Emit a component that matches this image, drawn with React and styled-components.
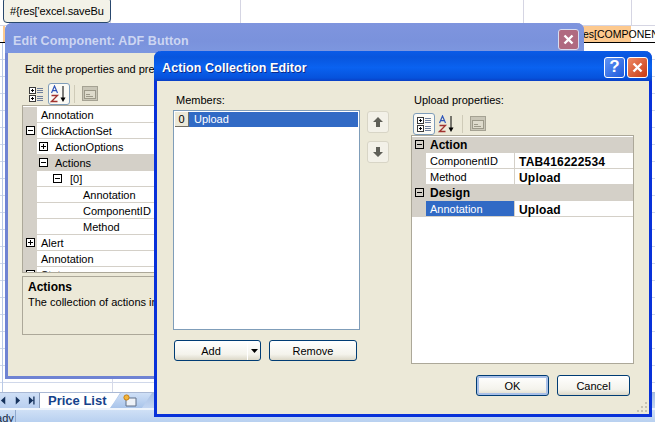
import styled, { createGlobalStyle } from "styled-components";

const GlobalStyle = createGlobalStyle`
  html, body { margin: 0; padding: 0; }
  body { width: 655px; height: 422px; overflow: hidden; background: #fff; font-family: "Liberation Sans", Arial, sans-serif; font-size: 11px; color: #000; }
`;

const Page = styled.div`
  position: relative;
  width: 655px;
  height: 422px;
  overflow: hidden;
  display: flex;
  flex-direction: column;
`;

// spreadsheet behind the dialogs
const Sheet = styled.div`
  flex: 1;
  position: relative;
  background-color: #fff;
  background-image:
    linear-gradient(#b9c9e6, #b9c9e6),
    linear-gradient(#d5d9e8, #d5d9e8),
    repeating-linear-gradient(to bottom, transparent 0 16px, #d0d8ea 16px 17px);
  background-size: 1px 100%, 1px 100%, 100% 100%;
  background-position: 2px 0, 112px 0, 0 9px;
  background-repeat: no-repeat, no-repeat, repeat;
`;

const TopCells = styled.div`
  display: flex;
  height: 25px;
  background: #fff;
  border-bottom: 1px solid #d5d5e3;
`;

const TopCell = styled.div`
  width: ${(p) => p.$w}px;
  flex: none;
  box-sizing: border-box;
  border-right: 1px solid #d5d5e3;
`;

const Row2 = styled.div`
  display: flex;
  height: 16px;
  border-bottom: 1px solid #000;
  background: #fff;
`;

const OrangeEdge = styled.div`
  width: 2px;
  margin-left: 3px;
  background: #fdc98e;
`;

const CellText = styled.div`
  margin-left: auto;
  width: 72px;
  height: 16px;
  font-size: 10.5px;
  line-height: 17px;
  white-space: nowrap;
  overflow: hidden;
  background: linear-gradient(to right, #fdc98e 48px, #fff 48px);
`;

const CellEditor = styled.div`
  position: absolute;
  left: 3px;
  top: -3px;
  width: 108px;
  height: 26px;
  box-sizing: border-box;
  padding: 5px 0 0 6px;
  border: 1px solid #29486e;
  border-radius: 4px;
  background: #f3f2e8;
  font-size: 11px;
  letter-spacing: -0.1px;
  line-height: 16px;
  white-space: nowrap;
  overflow: hidden;
`;

const TabStrip = styled.div`
  height: 15px;
  display: flex;
  align-items: stretch;
  background: linear-gradient(#a7bfe4, #c3d6f2);
  border-top: 1px solid #a9b8d4;
`;

const NavBox = styled.div`
  width: 40px;
  display: flex;
  align-items: center;
  justify-content: flex-end;
  gap: 7px;
  padding-right: 4px;
  box-sizing: border-box;
  border-right: 1px solid #8a9cba;
  background: linear-gradient(#cfdff6, #b9cff0);
`;

const SheetTab = styled.div`
  width: 80px;
  flex: none;
  background: #fff;
  color: #15428b;
  font-weight: bold;
  font-size: 13px;
  line-height: 16px;
  padding-left: 8px;
  box-sizing: border-box;
  clip-path: polygon(0 0, 100% 0, 88% 100%, 0 100%);
`;

const NewTab = styled.div`
  width: 42px;
  flex: none;
  margin-left: -10px;
  padding: 1px 0 0 13px;
  box-sizing: border-box;
  background: linear-gradient(#cfe0f7, #a9c4ea);
  clip-path: polygon(26% 0, 100% 0, 76% 100%, 0 100%);
`;

const StatusBar = styled.div`
  height: 12px;
  background: linear-gradient(#cfe0f6, #b8d0f0);
  display: flex;
  font-size: 11px;
  line-height: 17px;
  color: #15283f;
  overflow: hidden;
  border-top: 2px solid #eef4fc;
`;

const StatusText = styled.div`
  width: 24px;
  margin-left: -18px;
  flex: none;
  text-align: right;
  padding-right: 9px;
  border-right: 1px solid #8fa8cc;
`;

// window frames sit on a free desktop
const Win = styled.div`
  position: absolute;
  left: ${(p) => p.$x}px;
  top: ${(p) => p.$y}px;
  width: ${(p) => p.$w}px;
  height: ${(p) => p.$h}px;
  box-sizing: border-box;
  display: flex;
  flex-direction: column;
  border: 3px solid ${(p) => p.$frame};
  border-top: 0;
  border-radius: 7px 7px 0 0;
  background: #ece9d8;
`;

const TitleBar = styled.div`
  height: ${(p) => p.$h}px;
  flex: none;
  margin: 0 -3px;
  display: flex;
  align-items: center;
  padding: 2px ${(p) => p.$pr}px 0 8px;
  box-sizing: border-box;
  border-radius: 7px 7px 0 0;
  background: ${(p) => p.$bg};
  font-weight: bold;
  font-size: 12.5px;
  color: ${(p) => p.$color};
  text-shadow: ${(p) => p.$shadow || "none"};
  letter-spacing: 0.1px;
`;

const TitleText = styled.span`
  flex: 1;
  white-space: nowrap;
  padding-top: ${(p) => p.$pt}px;
`;

const CapBtn = styled.div`
  width: 21px;
  height: 21px;
  box-sizing: border-box;
  border: 1px solid ${(p) => p.$edge};
  border-radius: 3px;
  background: ${(p) => p.$bg};
  margin-left: 2px;
  display: flex;
  align-items: center;
  justify-content: center;
  color: #fff;
  font-size: 17px;
  font-weight: bold;
  text-shadow: none;
`;

const EditBody = styled.div`
  flex: 1;
  padding: 8px 0 0 14px;
  display: flex;
  flex-direction: column;
  min-height: 0;
`;

const Hint = styled.div`
  font-size: 11px;
  line-height: 16px;
  white-space: nowrap;
  padding-left: 3px;
`;

const Toolbar = styled.div`
  height: 23px;
  display: flex;
  align-items: center;
  margin-top: ${(p) => p.$mt || 0}px;
  padding-left: ${(p) => p.$pl}px;
  gap: 1px;
`;

const ToolBtn = styled.div`
  width: 22px;
  height: 22px;
  box-sizing: border-box;
  display: flex;
  align-items: center;
  justify-content: center;
  border: 1px solid ${(p) => (p.$active ? "#7f9db9" : "transparent")};
  border-radius: 3px;
  background: ${(p) => (p.$active ? "#fbfaf5" : "transparent")};
`;

const ToolSep = styled.div`
  width: 1px;
  height: 18px;
  background: #cfcbb8;
  margin: 0 3px;
`;

const GridRow = styled.div`
  height: 16px;
  box-sizing: border-box;
  display: flex;
  border-bottom: 1px solid #d4d0c8;
  background: ${(p) => (p.$band ? "#d4d0c8" : "#fff")};
  font-size: 11px;
  line-height: 16px;
  white-space: nowrap;
`;

const Gutter = styled.div`
  width: 14px;
  flex: none;
  background: #d4d0c8;
  display: flex;
  align-items: center;
  justify-content: center;
`;

const RowLabel = styled.div`
  flex: ${(p) => (p.$fixed ? "none" : 1)};
  width: ${(p) => (p.$fixed ? `${p.$fixed}px` : "auto")};
  display: flex;
  align-items: center;
  gap: ${(p) => p.$gap || 7}px;
  padding-left: ${(p) => p.$indent}px;
  box-sizing: border-box;
  font-weight: ${(p) => (p.$bold ? "bold" : "normal")};
  font-size: ${(p) => (p.$bold ? 12 : 11)}px;
  background: ${(p) => (p.$selected ? "#316ac5" : "transparent")};
  color: ${(p) => (p.$selected ? "#fff" : "#000")};
  border-right: ${(p) => (p.$fixed ? "1px solid #d4d0c8" : "0")};
`;

const RowValue = styled.div`
  flex: 1;
  padding-left: 4px;
  font-weight: bold;
  font-size: 12px;
  letter-spacing: 0.2px;
`;

const PropGrid = styled.div`
  height: ${(p) => p.$h}px;
  flex: none;
  box-sizing: border-box;
  border: 1px solid #aca899;
  padding-top: 1px;
  background: #fff;
  overflow: hidden;
`;

const DetailGrid = styled(PropGrid)`
  ${RowLabel}, ${RowValue} {
    padding-top: 1px;
  }
`;

const Expander = styled.span`
  width: 9px;
  height: 9px;
  flex: none;
  box-sizing: border-box;
  border: 1px solid #000;
  background: ${(p) => (p.$clear ? "transparent" : "#fff")};
  position: relative;
  &::before {
    content: "";
    position: absolute;
    left: 1px;
    right: 1px;
    top: 3px;
    height: 1px;
    background: #000;
  }
  &::after {
    content: "";
    display: ${(p) => (p.$plus ? "block" : "none")};
    position: absolute;
    top: 1px;
    bottom: 1px;
    left: 3px;
    width: 1px;
    background: #000;
  }
`;

const DescPanel = styled.div`
  margin-top: 3px;
  height: 59px;
  box-sizing: border-box;
  border: 1px solid #aca899;
  padding: 3px 0 0 5px;
  font-size: 11px;
  line-height: 15px;
  white-space: nowrap;
`;

const DescTitle = styled.div`
  font-weight: bold;
  font-size: 12px;
`;

const DialogBody = styled.div`
  flex: 1;
  position: relative;
  display: flex;
  flex-direction: column;
  padding: 0 19px 0 16px;
  min-height: 0;
`;

const Columns = styled.div`
  display: flex;
  margin-top: 11px;
`;

const MembersCol = styled.div`
  width: 187px;
  flex: none;
`;

const ColLabel = styled.div`
  font-size: 11px;
  line-height: 16px;
  padding-left: 3px;
`;

const ListBox = styled.div`
  margin-top: 2px;
  height: 220px;
  box-sizing: border-box;
  border: 1px solid #7f9db9;
  background: #fff;
  padding: 1px;
`;

const ListItem = styled.div`
  height: 15px;
  display: flex;
  background: #316ac5;
  color: #fff;
  font-size: 11px;
  line-height: 15px;
`;

const IndexBadge = styled.span`
  width: 14px;
  flex: none;
  background: #ece9d8;
  color: #000;
  text-align: center;
  border-right: 1px solid #716f64;
  border-bottom: 1px solid #716f64;
  box-sizing: border-box;
`;

const ItemText = styled.span`
  padding-left: 5px;
`;

const ButtonRow = styled.div`
  display: flex;
  gap: 8px;
  margin-top: 10px;
  padding-left: 1px;
`;

const XpButton = styled.div`
  width: ${(p) => p.$w}px;
  height: 21px;
  box-sizing: border-box;
  border: 1px solid #003c74;
  border-radius: 3px;
  background: linear-gradient(#fff, #f4f3ec 70%, #dcd8c8);
  box-shadow: ${(p) => (p.$primary ? "inset 0 0 0 2px #a9c0e8" : "none")};
  display: flex;
  align-items: center;
  justify-content: center;
  font-size: 11px;
`;

const SplitLabel = styled.span`
  flex: 1;
  text-align: center;
`;

const SplitArrow = styled.span`
  width: 12px;
  height: 100%;
  display: flex;
  align-items: center;
  justify-content: center;
  border-left: 1px solid #fff;
`;

const ArrowCol = styled.div`
  width: 22px;
  flex: none;
  margin: 19px 0 0 7px;
  display: flex;
  flex-direction: column;
  gap: 8px;
`;

const ArrowBtn = styled.div`
  width: 22px;
  height: 22px;
  box-sizing: border-box;
  border: 1px solid #d8d5c6;
  border-radius: 3px;
  background: #f3f1e8;
  display: flex;
  align-items: center;
  justify-content: center;
`;

const PropsCol = styled.div`
  width: 223px;
  margin-left: 22px;
  flex: none;
`;

const DialogFooter = styled.div`
  display: flex;
  justify-content: flex-end;
  gap: 8px;
  margin-top: 11px;
`;

const Grip = styled.svg`
  position: absolute;
  right: 1px;
  bottom: 1px;
`;

const CloseGlyph = () => (
  <svg width="11" height="11" viewBox="0 0 11 11">
    <path d="M1.5 1.5l8 8M9.5 1.5l-8 8" stroke="#fff" strokeWidth="2.4" fill="none" />
  </svg>
);

const ExpanderIcon = () => (
  <svg width="16" height="16" viewBox="0 0 16 16">
    <g fill="#fff" stroke="#3a3a3a">
      <rect x="1.5" y="1.5" width="6" height="6" />
      <rect x="1.5" y="9.5" width="6" height="6" />
    </g>
    <path d="M3 4.5h3M4.5 3v3M3 12.5h3M4.5 11v3" stroke="#000" />
    <path d="M9 2.5h6M9 4.5h6M9 6.5h6M9 10.5h6M9 12.5h6M9 14.5h6" stroke="#6f7f9c" />
  </svg>
);

const SortIcon = () => (
  <svg width="18" height="18" viewBox="0 0 18 18">
    <path d="M1.5 8 4.5 1l3 7M2.6 5.6h3.8" fill="none" stroke="#2f55b8" strokeWidth="1.2" />
    <path d="M1.5 10.5h6L1.5 16.5h6" fill="none" stroke="#a0322f" strokeWidth="1.3" />
    <path d="M13 1v12" stroke="#000" />
    <path d="M10.5 12.5h5L13 17z" fill="#000" />
  </svg>
);

const PagesIcon = () => (
  <svg width="16" height="15" viewBox="0 0 16 15">
    <rect x="0.5" y="0.5" width="15" height="14" fill="#c9c6b7" stroke="#a5a293" />
    <rect x="2.5" y="4.5" width="11" height="8" fill="#dedbcc" stroke="#9c9989" />
    <path d="M4 8.5h4M4 10.5h7" stroke="#9c9989" />
  </svg>
);

const MoveIcon = ({ down }) => (
  <svg width="12" height="12" viewBox="0 0 12 12">
    <path d={down ? "M4 1h4v5h3L6 11 1 6h3z" : "M4 11h4V6h3L6 1 1 6h3z"} fill="#5f5f57" />
  </svg>
);

const DropArrow = () => (
  <svg width="7" height="4" viewBox="0 0 7 4">
    <path d="M0 0h7L3.5 4z" fill="#000" />
  </svg>
);

const NavArrow = ({ d }) => (
  <svg width="8" height="9" viewBox="0 0 8 9">
    <path d={d} fill="#15315c" />
  </svg>
);

const NewSheetIcon = () => (
  <svg width="14" height="13" viewBox="0 0 14 13">
    <path d="M3 4h10v8H3z" fill="#eef2f8" stroke="#5f6f88" />
    <circle cx="3.5" cy="3.5" r="2.6" fill="#f2b53c" stroke="#c77f14" />
  </svg>
);

const editRows = [
  { label: "Annotation" },
  { label: "ClickActionSet", outer: "minus" },
  { label: "ActionOptions", expander: "plus" },
  { label: "Actions", expander: "minus", band: true },
  { label: "[0]", expander: "minus", indent: 16, gap: 8 },
  { label: "Annotation", indent: 46 },
  { label: "ComponentID", indent: 46 },
  { label: "Method", indent: 46 },
  { label: "Alert", outer: "plus" },
  { label: "Annotation" },
  { label: "State", outer: "plus" },
];

const App = () => {
  return (
    <Page>
      <GlobalStyle />
      <Sheet>
        <TopCells>
          <TopCell $w={111} />
          <TopCell $w={130} />
          <TopCell $w={283} />
          <TopCell $w={108} />
        </TopCells>
        <Row2>
          <OrangeEdge />
          <CellText>es[COMPONENT</CellText>
        </Row2>
        <CellEditor>#{"{"}res['excel.saveBu</CellEditor>
      </Sheet>
      <TabStrip>
        <NavBox>
          <NavArrow d="M6 0v9L1 4.5z" />
          <NavArrow d="M2 0v9l5-4.5z" />
          <NavArrow d="M1 0v9l5-4.5zM6 0h1.5v9H6z" />
        </NavBox>
        <SheetTab>Price List</SheetTab>
        <NewTab>
          <NewSheetIcon />
        </NewTab>
      </TabStrip>
      <StatusBar>
        <StatusText>Ready</StatusText>
      </StatusBar>

      <Win $x={5} $y={23} $w={579} $h={356} $frame="#6f83d3">
        <TitleBar $h={30} $pr={5} $bg="linear-gradient(#7f95de, #7a92dc 60%, #7d97e0)" $color="#cdd6f2">
          <TitleText $pt={3}>Edit Component: ADF Button</TitleText>
          <CapBtn $bg="#b06a80" $edge="#d8dcef">
            <CloseGlyph />
          </CapBtn>
        </TitleBar>
        <EditBody>
          <Hint>Edit the properties and pres</Hint>
          <Toolbar $mt={5} $pl={3}>
            <ToolBtn>
              <ExpanderIcon />
            </ToolBtn>
            <ToolBtn $active>
              <SortIcon />
            </ToolBtn>
            <ToolSep />
            <ToolBtn>
              <PagesIcon />
            </ToolBtn>
          </Toolbar>
          <PropGrid $h={168}>
            {editRows.map((row, i) => (
              <GridRow key={i} $band={row.band}>
                <Gutter>{row.outer && <Expander $plus={row.outer === "plus"} />}</Gutter>
                <RowLabel $indent={row.indent ?? (row.expander ? 2 : 4)} $gap={row.gap}>
                  {row.expander && <Expander $plus={row.expander === "plus"} />}
                  {row.label}
                </RowLabel>
              </GridRow>
            ))}
          </PropGrid>
          <DescPanel>
            <DescTitle>Actions</DescTitle>
            The collection of actions in
          </DescPanel>
        </EditBody>
      </Win>

      <Win $x={154} $y={51} $w={498} $h={366} $frame="#0831d9">
        <TitleBar
          $h={30}
          $pr={4}
          $bg="linear-gradient(#0a5be8, #0855dd 20%, #0a62f0 55%, #0652dc 90%, #0a3fc4)"
          $color="#fff"
          $shadow="1px 1px 0 #0a2a8a"
        >
          <TitleText $pt={2}>Action Collection Editor</TitleText>
          <CapBtn $bg="linear-gradient(135deg, #5f93f5, #1f5adb)" $edge="#fff">
            ?
          </CapBtn>
          <CapBtn $bg="linear-gradient(135deg, #ee8a66, #c83a12)" $edge="#fff">
            <CloseGlyph />
          </CapBtn>
        </TitleBar>
        <DialogBody>
          <Columns>
            <MembersCol>
              <ColLabel>Members:</ColLabel>
              <ListBox>
                <ListItem>
                  <IndexBadge>0</IndexBadge>
                  <ItemText>Upload</ItemText>
                </ListItem>
              </ListBox>
              <ButtonRow>
                <XpButton $w={87}>
                  <SplitLabel>Add</SplitLabel>
                  <SplitArrow>
                    <DropArrow />
                  </SplitArrow>
                </XpButton>
                <XpButton $w={88}>Remove</XpButton>
              </ButtonRow>
            </MembersCol>
            <ArrowCol>
              <ArrowBtn>
                <MoveIcon />
              </ArrowBtn>
              <ArrowBtn>
                <MoveIcon down />
              </ArrowBtn>
            </ArrowCol>
            <PropsCol>
              <ColLabel>Upload properties:</ColLabel>
              <Toolbar $mt={4} $pl={2}>
                <ToolBtn $active>
                  <ExpanderIcon />
                </ToolBtn>
                <ToolBtn>
                  <SortIcon />
                </ToolBtn>
                <ToolSep />
                <ToolBtn>
                  <PagesIcon />
                </ToolBtn>
              </Toolbar>
              <DetailGrid $h={229}>
                <GridRow $band>
                  <Gutter>
                    <Expander $clear />
                  </Gutter>
                  <RowLabel $indent={4} $bold>
                    Action
                  </RowLabel>
                </GridRow>
                <GridRow>
                  <Gutter />
                  <RowLabel $indent={4} $fixed={89}>
                    ComponentID
                  </RowLabel>
                  <RowValue>TAB416222534</RowValue>
                </GridRow>
                <GridRow>
                  <Gutter />
                  <RowLabel $indent={4} $fixed={89}>
                    Method
                  </RowLabel>
                  <RowValue>Upload</RowValue>
                </GridRow>
                <GridRow $band>
                  <Gutter>
                    <Expander $clear />
                  </Gutter>
                  <RowLabel $indent={4} $bold>
                    Design
                  </RowLabel>
                </GridRow>
                <GridRow>
                  <Gutter />
                  <RowLabel $indent={4} $fixed={89} $selected>
                    Annotation
                  </RowLabel>
                  <RowValue>Upload</RowValue>
                </GridRow>
              </DetailGrid>
            </PropsCol>
          </Columns>
          <DialogFooter>
            <XpButton $w={73} $primary>
              OK
            </XpButton>
            <XpButton $w={73}>Cancel</XpButton>
          </DialogFooter>
          <Grip width="12" height="12" viewBox="0 0 12 12">
            <path d="M9 1h2v2H9zM5 5h2v2H5zM9 5h2v2H9zM1 9h2v2H1zM5 9h2v2H5zM9 9h2v2H9z" fill="#c5c2b2" />
          </Grip>
        </DialogBody>
      </Win>
    </Page>
  );
};

export default App;
